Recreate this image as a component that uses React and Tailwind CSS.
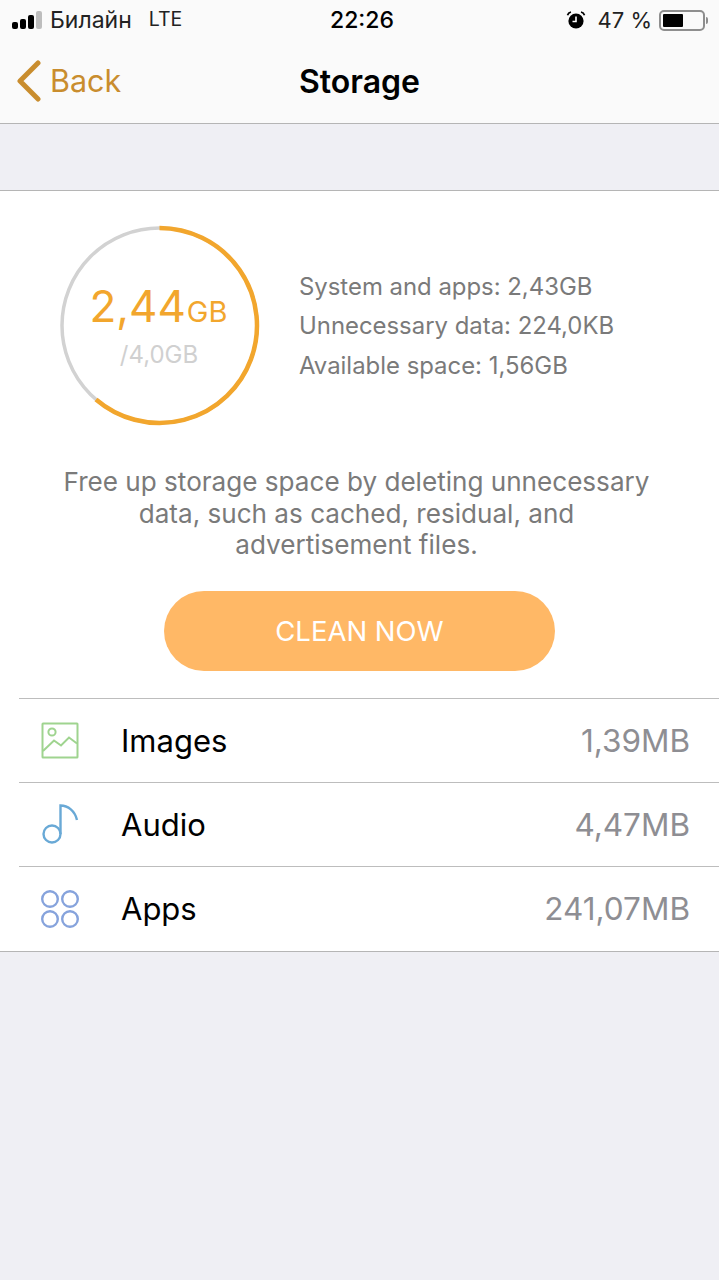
const font = "font-['Inter','Noto_Sans',sans-serif]";

function SignalBars() {
  return (
    <div className="flex items-end gap-[2px]">
      <div className="w-[6px] h-[7px] rounded-[2px] bg-black" />
      <div className="w-[6px] h-[10px] rounded-[2px] bg-black" />
      <div className="w-[6px] h-[14px] rounded-[2px] bg-black" />
      <div className="w-[6px] h-[18px] rounded-[2px] bg-[#bdbdbd]" />
    </div>
  );
}

function AlarmIcon() {
  return (
    <svg width="20" height="20" viewBox="0 0 20 20" fill="none">
      <circle cx="10" cy="11" r="7.6" fill="#000" />
      <path d="M10 6.5V11.5H6.5" stroke="#fff" strokeWidth="1.6" fill="none" />
      <path d="M1.5 5.2C2 3.4 3.2 2.4 5 2M18.5 5.2C18 3.4 16.8 2.4 15 2" stroke="#000" strokeWidth="1.7" />
    </svg>
  );
}

function Battery() {
  return (
    <div className="flex items-center gap-[1px]">
      <div className="w-[46px] h-[21px] border-2 border-[#8e8e8e] rounded-[5px] p-[2px] flex">
        <div className="w-[20px] bg-black rounded-[1px]" />
      </div>
      <div className="w-[2px] h-[7px] bg-[#8e8e8e] rounded-r-[2px]" />
    </div>
  );
}

function StorageRing() {
  return (
    <svg className="absolute inset-0" width="200" height="204" viewBox="0 0 200 204" fill="none">
      <circle cx="99.5" cy="101.5" r="97.5" stroke="#d2d2d2" strokeWidth="3.5" />
      <path d="M99.5 4A97.5 97.5 0 1 1 36 175.5" stroke="#f2a62d" strokeWidth="4.5" />
    </svg>
  );
}

function ImagesIcon() {
  return (
    <svg width="38" height="38" viewBox="0 0 38 38" fill="none" stroke="#9fd48f" strokeWidth="2">
      <rect x="1.5" y="1.5" width="35" height="34" rx="0.5" />
      <circle cx="11" cy="10" r="3.6" />
      <path d="M2 29L13 18.5L20 23.5L28 15.5L36 21.5" />
    </svg>
  );
}

function AudioIcon() {
  return (
    <svg width="38" height="42" viewBox="0 0 38 42" fill="none" stroke="#69a9d6" strokeWidth="2.4">
      <circle cx="11" cy="30" r="8.5" />
      <path d="M19.5 30V1.5C27 1.5 34 7 36 16" />
    </svg>
  );
}

function AppsIcon() {
  return (
    <svg width="40" height="40" viewBox="0 0 40 40" fill="none" stroke="#86a3dc" strokeWidth="2.4">
      <circle cx="10" cy="10" r="7.8" />
      <circle cx="30" cy="10" r="7.8" />
      <circle cx="10" cy="30" r="7.8" />
      <circle cx="30" cy="30" r="7.8" />
    </svg>
  );
}

const rows = [
  { name: "Images", size: "1,39MB", icon: <ImagesIcon /> },
  { name: "Audio", size: "4,47MB", icon: <AudioIcon /> },
  { name: "Apps", size: "241,07MB", icon: <AppsIcon /> },
];

export default function App() {
  return (
    <div className={`w-[719px] h-[1280px] bg-[#efeff4] ${font} flex flex-col overflow-hidden`}>
      {/* status bar + nav */}
      <div className="h-[124px] bg-[#fafafa] border-b border-[#b5b5b5] shrink-0">
        <div className="h-[40px] pl-[12px] pr-[11px] grid grid-cols-3 items-center text-black">
          <div className="flex items-center whitespace-nowrap">
            <SignalBars />
            <span className="ml-[8px] text-[23px] text-[#222]">Билайн</span>
            <span className="ml-[17px] text-[19.5px] text-[#222]">LTE</span>
          </div>
          <div className="text-center text-[23px] font-medium pl-[4px]">22:26</div>
          <div className="flex items-center justify-end whitespace-nowrap">
            <AlarmIcon />
            <span className="ml-[12px] mr-[7px] text-[22px] text-[#222]">47 %</span>
            <Battery />
          </div>
        </div>
        <div className="relative h-[83px] flex items-center justify-center">
          <div className="absolute left-[17px] top-[19px] flex items-center gap-[9px]">
            <svg width="24" height="42" viewBox="0 0 24 42" fill="none" stroke="#c98d2e" strokeWidth="5" strokeLinecap="round" strokeLinejoin="round">
              <path d="M21 3L3 21L21 39" />
            </svg>
            <span className="text-[30.5px] text-[#c98d2e] mt-[-1px]">Back</span>
          </div>
          <h1 className="text-[32px] font-semibold text-black">Storage</h1>
        </div>
      </div>

      <div className="h-[66px] shrink-0" />

      {/* main panel */}
      <div className="bg-white border-y border-[#b5b5b5] h-[762px] shrink-0 flex flex-col">
        <div className="flex items-center pt-[33px] pl-[60px]">
          <div className="relative w-[200px] h-[200px] shrink-0 flex flex-col items-center justify-center">
            <StorageRing />
            <div className="flex items-baseline text-[#f2a62d] mt-[-1px] ml-[-3px]">
              <span className="text-[44px] leading-[56px]">2,44</span>
              <span className="text-[29px] ml-[1px]">GB</span>
            </div>
            <div className="text-[24px] leading-[28px] text-[#d0d0d0] mt-[7px] ml-[-2px]">/4,0GB</div>
          </div>
          <div className="ml-[39px] text-[#7a7a7a] text-[23.9px] leading-[39.5px] mt-[4px] whitespace-nowrap">
            <div>System and apps: 2,43GB</div>
            <div>Unnecessary data: 224,0KB</div>
            <div>Available space: 1,56GB</div>
          </div>
        </div>

        <p className="mt-[42px] pr-[6px] text-center text-[26.1px] leading-[31.5px] text-[#7a7a7a] whitespace-nowrap">
          Free up storage space by deleting unnecessary
          <br />
          data, such as cached, residual, and
          <br />
          advertisement files.
        </p>

        <button className="mt-[30px] mx-auto w-[391px] h-[80px] pt-[3px] shrink-0 rounded-full bg-[#ffb866] text-white text-[27.5px] flex items-center justify-center">
          CLEAN NOW
        </button>

        <div className="mt-[27px] ml-[19px]">
          {rows.map((row) => (
            <div
              key={row.name}
              className="h-[84px] pt-[2px] flex items-center border-t border-[#bdbdbd] pr-[29px]"
            >
              <div className="w-[82px] flex justify-center">{row.icon}</div>
              <span className="ml-[20px] text-[31px] text-black">{row.name}</span>
              <span className="ml-auto text-[31.5px] text-[#8e8e93]">{row.size}</span>
            </div>
          ))}
        </div>
      </div>
    </div>
  );
}
